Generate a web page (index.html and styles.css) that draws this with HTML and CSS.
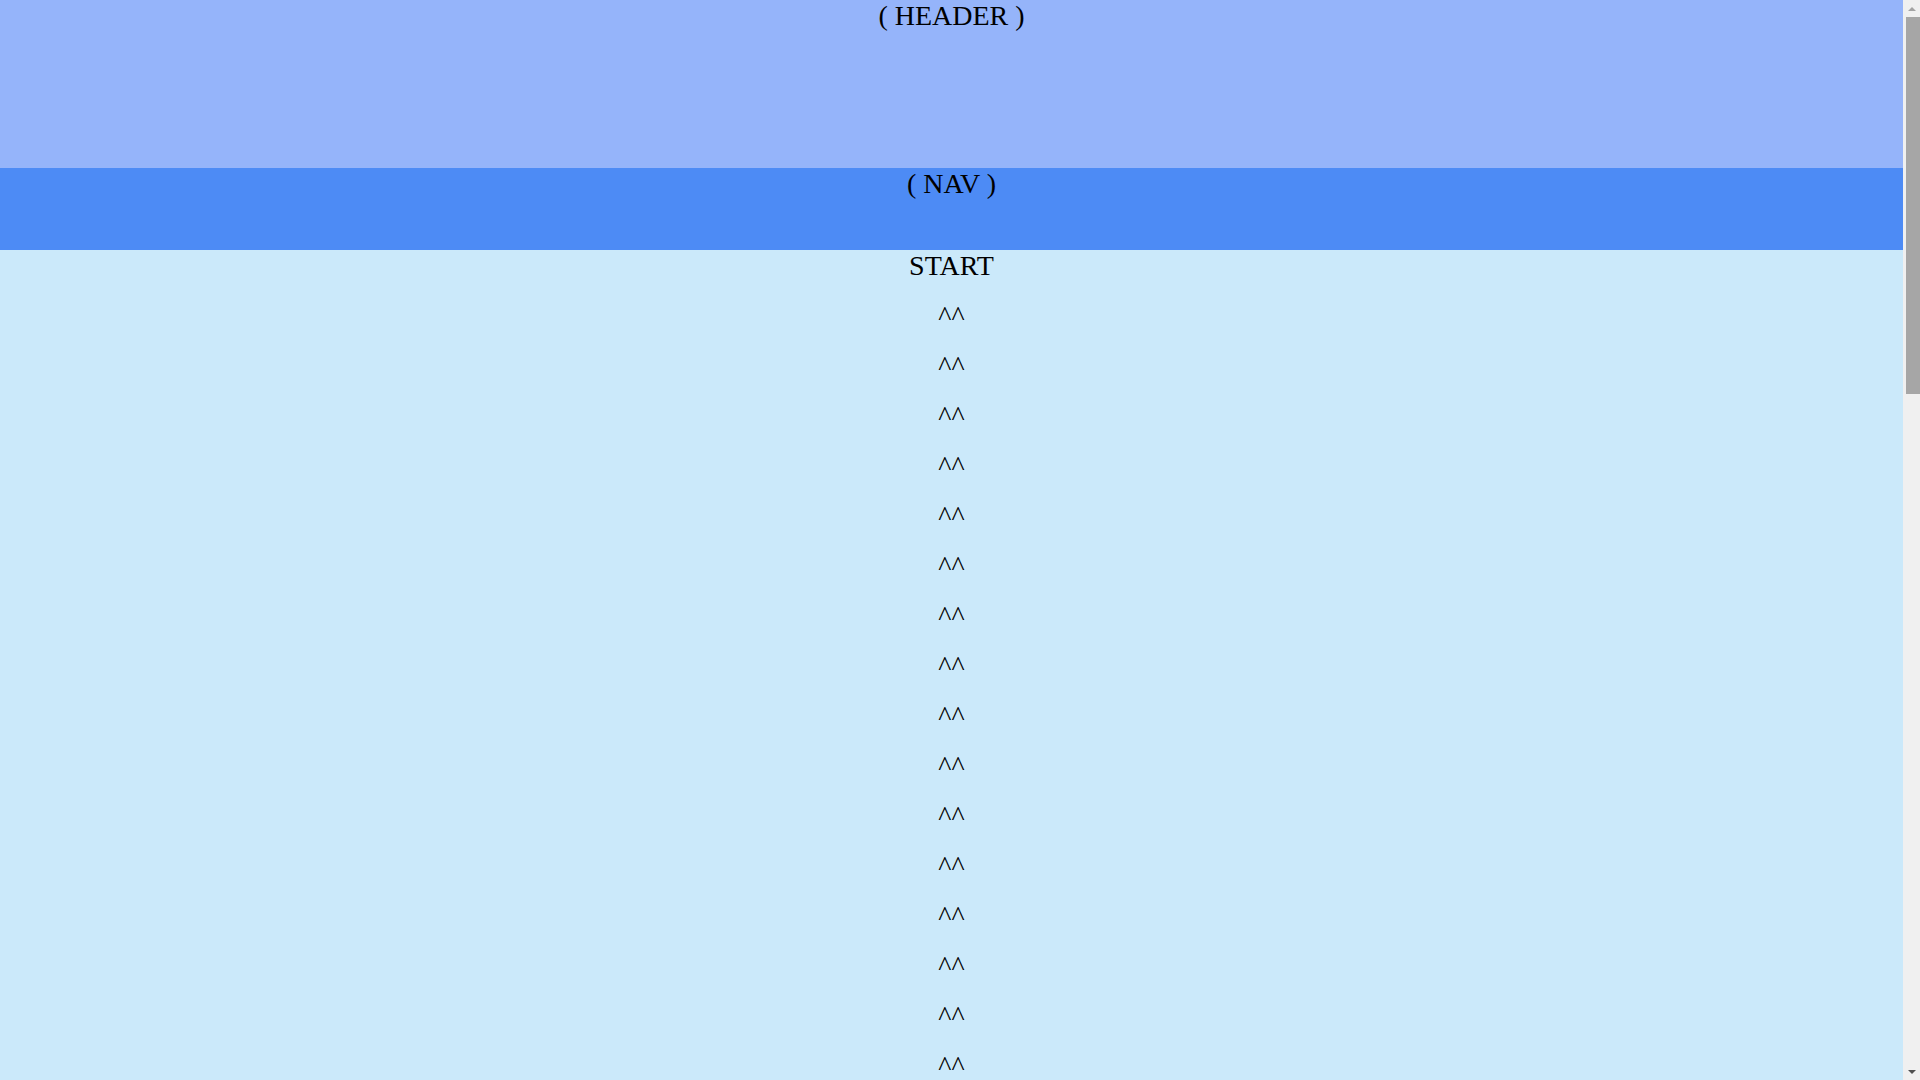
FILE: index.html
```html
<!DOCTYPE html>
<html>
<head>
<meta charset="utf-8">
<title>Layout</title>
<link rel="stylesheet" href="styles.css">
</head>
<body>
<div class="page">
<header class="site-header">( HEADER )</header>
<nav class="site-nav">( NAV )</nav>
<main class="content">
<div class="line">START</div>
<div class="line">^^</div><div class="line">^^</div><div class="line">^^</div><div class="line">^^</div>
<div class="line">^^</div><div class="line">^^</div><div class="line">^^</div><div class="line">^^</div>
<div class="line">^^</div><div class="line">^^</div><div class="line">^^</div><div class="line">^^</div>
<div class="line">^^</div><div class="line">^^</div><div class="line">^^</div><div class="line">^^</div>
</main>
</div>
<aside class="scrollbar">
<div class="arrow arrow-up"></div>
<div class="track"><div class="thumb"></div></div>
<div class="arrow arrow-down"></div>
</aside>
</body>
</html>
```

FILE: styles.css
```css
html, body {
  margin: 0;
  padding: 0;
}
body {
  height: 100vh;
  overflow: hidden;
  display: flex;
  font-family: "Liberation Serif", "Times New Roman", serif;
  font-size: 28px;
  line-height: 32px;
  color: #000;
  background: #cbe9fa;
  text-align: center;
}
.page {
  flex: 1;
  overflow: hidden;
  display: flex;
  flex-direction: column;
}
.site-header {
  flex: 0 0 168px;
  background: #95b4fa;
}
.site-nav {
  flex: 0 0 82px;
  background: #4d8bf5;
}
.content {
  flex: 1;
  background: #cbe9fa;
  display: flex;
  flex-direction: column;
  align-items: center;
}
.line {
  flex: 0 0 50px;
}
.scrollbar {
  width: 17px;
  flex: 0 0 17px;
  background: #f0f0f0;
  display: flex;
  flex-direction: column;
  align-items: center;
}
.arrow {
  flex: 0 0 17px;
  width: 17px;
  display: flex;
  align-items: center;
  justify-content: center;
}
.arrow-up::before {
  content: "";
  border-left: 4px solid transparent;
  border-right: 4px solid transparent;
  border-bottom: 4px solid #a3a3a3;
}
.arrow-down::before {
  content: "";
  border-left: 4px solid transparent;
  border-right: 4px solid transparent;
  border-top: 4px solid #505050;
}
.track {
  flex: 1;
  width: 100%;
  display: flex;
  flex-direction: column;
  align-items: flex-end;
}
.thumb {
  width: 14px;
  height: 377px;
  background: #a6a6a6;
}
```
